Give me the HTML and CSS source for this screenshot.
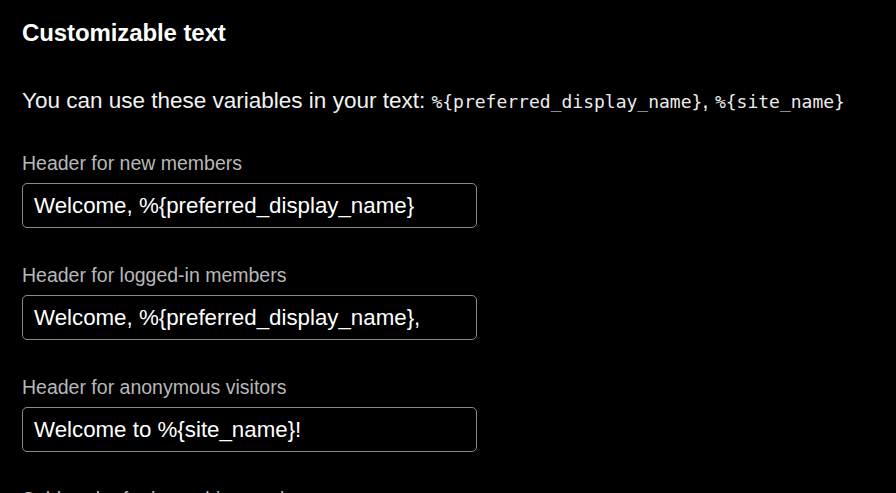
FILE: index.html
```html
<!DOCTYPE html>
<html>
<head>
    <link rel="stylesheet" href="styles.css">
</head>
<body>
  <div class="settings">
    <h2 class="settings-title">Customizable text</h2>
    <p class="settings-hint">
      You can use these variables in your text:
      <code>%{preferred_display_name}</code>, <code>%{site_name}</code>
    </p>

    <div class="field">
      <label class="field-label" for="header-new">Header for new members</label>
      <input class="field-input" id="header-new" type="text" value="Welcome, %{preferred_display_name}">
    </div>
    <div class="field">
      <label class="field-label" for="header-logged">Header for logged-in members</label>
      <input class="field-input" id="header-logged" type="text" value="Welcome, %{preferred_display_name},">
    </div>
    <div class="field">
      <label class="field-label" for="header-anon">Header for anonymous visitors</label>
      <input class="field-input" id="header-anon" type="text" value="Welcome to %{site_name}!">
    </div>
    <div class="field">
      <label class="field-label" for="sub-logged">Subheader for logged-in members</label>
      <input class="field-input" id="sub-logged" type="text" value="">
    </div>
  </div>
</body>
</html>
```

FILE: styles.css
```css
/* dark settings page */
body {
    margin: 0;
    background-color: #000;
    color: #fff;
    font-family: "Liberation Sans", Arial, sans-serif;
    overflow: hidden;
}

.settings {
    padding: 18px 22px 0 22px;
}

.settings-title {
    margin: 0;
    font-size: 24px;
    line-height: 30px;
    font-weight: bold;
    letter-spacing: -0.1px;
}

.settings-hint {
    margin: 39px 0 35px 0;
    font-size: 22.5px;
    line-height: 28px;
    color: #f2f2f2;
}

/* variable names */
.settings-hint code {
    font-family: "DejaVu Sans Mono", monospace;
    font-size: 18px;
    color: #ececec;
}

/* one label + input pair */
.field {
    display: flex;
    flex-direction: column;
    margin-bottom: 35px;
}

.field-label {
    font-size: 19.5px;
    line-height: 24px;
    color: #b8b8b8;
    margin-bottom: 8px;
}

.field-input {
    box-sizing: border-box;
    width: 455px;
    height: 45px;
    padding: 0 11px;
    background-color: #000;
    color: #fff;
    border: 1px solid #8a8a8a;
    border-radius: 5px;
    font-family: "Liberation Sans", Arial, sans-serif;
    font-size: 22.3px;
    outline: none;
}
```
